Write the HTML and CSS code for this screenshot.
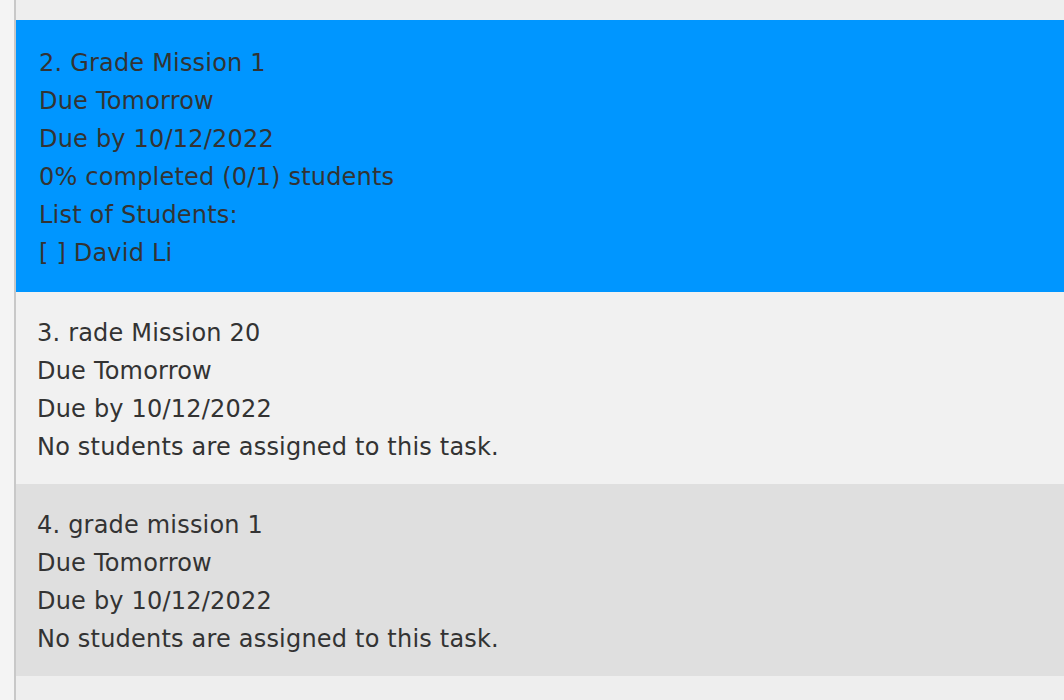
FILE: index.html
```html
<!DOCTYPE html>
<html>
<head>
<meta charset="utf-8">
<link rel="stylesheet" href="styles.css">
</head>
<body>
<div class="page">
  <div class="gutter"></div>
  <div class="list">
    <div class="cell cell-top"></div>
    <div class="cell cell-selected">
      <div class="line">2. Grade Mission 1</div>
      <div class="line">Due Tomorrow</div>
      <div class="line">Due by 10/12/2022</div>
      <div class="line">0% completed (0/1) students</div>
      <div class="line">List of Students:</div>
      <div class="line">[ ] David Li</div>
    </div>
    <div class="cell cell-even">
      <div class="line">3. rade Mission 20</div>
      <div class="line">Due Tomorrow</div>
      <div class="line">Due by 10/12/2022</div>
      <div class="line">No students are assigned to this task.</div>
    </div>
    <div class="cell cell-odd">
      <div class="line">4. grade mission 1</div>
      <div class="line">Due Tomorrow</div>
      <div class="line">Due by 10/12/2022</div>
      <div class="line">No students are assigned to this task.</div>
    </div>
    <div class="cell cell-bottom"></div>
  </div>
</div>
</body>
</html>
```

FILE: styles.css
```css
html, body {
  margin: 0;
  padding: 0;
  height: 100%;
  overflow: hidden;
}
body {
  background: #f4f4f4;
  font-family: "DejaVu Sans", sans-serif;
  color: #333333;
}
.page {
  display: flex;
  height: 700px;
}
.gutter {
  width: 14px;
  flex: none;
  background: #f4f4f4;
  border-right: 2px solid #c8c8c8;
}
.list {
  flex: 1;
  display: flex;
  flex-direction: column;
  background: #eeeeee;
}
.cell {
  padding: 22px 20px 18px 21px;
}
.cell-top {
  height: 20px;
  padding: 0;
  background: #eeeeee;
}
.cell-selected {
  background: #0096ff;
  padding: 24px 20px 20px 23px;
}
.cell-even {
  background: #f1f1f1;
}
.cell-odd {
  background: #dfdfdf;
}
.cell-bottom {
  flex: 1;
  padding: 0;
  background: #eeeeee;
}
.line {
  font-size: 24px;
  letter-spacing: 0.2px;
  line-height: 38px;
  height: 38px;
  white-space: nowrap;
}
```
